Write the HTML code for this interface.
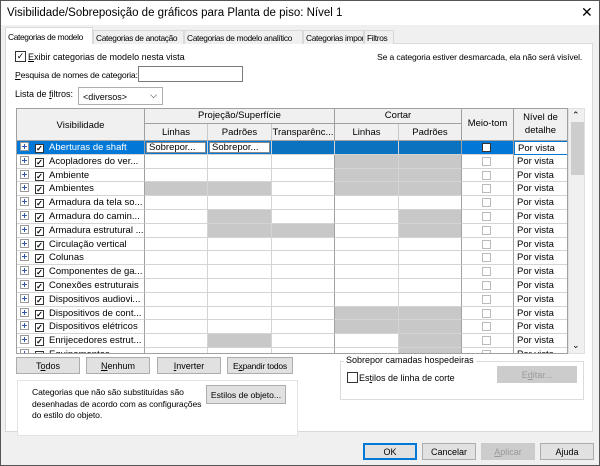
<!DOCTYPE html><html><head><meta charset="utf-8"><style>
*{box-sizing:border-box;margin:0;padding:0}
body{width:600px;height:466px;overflow:hidden;background:#f0f0f0;font-family:"Liberation Sans",sans-serif;font-size:9.5px;color:#000;position:relative;white-space:nowrap}
.a{position:absolute}
.win{left:0;top:0;width:600px;height:466px;border:1px solid #555}
.title{left:1px;top:1px;width:598px;height:24px;background:#fff;font-size:11.5px;padding:6px 0 0 6px}
.tab{top:30px;height:14px;border:1px solid #d9d9d9;border-bottom:none;background:#f0f0f0;font-size:8.4px;padding:2px 1px 0 2px;white-space:nowrap;overflow:hidden;letter-spacing:-0.35px}
.panel{left:5px;top:43px;width:588px;height:389px;background:#fff;border:1px solid #d9d9d9}
.cb{width:11px;height:11px;border:1px solid #333;background:#fff}
.inp{background:#fff;border:1px solid #7a7a7a}
.btn{background:#e1e1e1;border:1px solid #adadad;text-align:center;font-size:9px;padding-top:3px;white-space:nowrap;overflow:hidden}
.tbl{left:16px;top:108px;width:552px;height:246px;border:1px solid #a0a0a0;overflow:hidden;background:#fff}
.h{background:#f0f0f0;border-right:1px solid #a0a0a0;border-bottom:1px solid #a0a0a0;text-align:center;font-size:9.5px;overflow:hidden}
.row{display:flex;height:13.8px;position:relative}
.c{height:13.8px;border-right:1px solid #d4d4d4;border-bottom:1px solid #d4d4d4;white-space:nowrap;overflow:hidden;font-size:9.5px;line-height:13px}
.g{background:#c8c8c8}
.v{width:128px;padding-left:3px;border-right-color:#a0a0a0}
.w1{width:63px}.w2{width:64px}
.mt{width:52px;border-right-color:#a0a0a0;position:relative}
.nv{width:54px;padding-left:3px}
.ex{display:inline-block;width:9px;height:9px;border:1px solid #999;vertical-align:-1px;position:relative;margin-right:1px}
.ex:before{content:"";position:absolute;left:1px;top:3px;width:5px;height:1px;background:#35a}
.ex:after{content:"";position:absolute;left:3px;top:1px;width:1px;height:5px;background:#35a}
.ck{display:inline-block;width:9px;height:9px;border:1px solid #333;margin:0 5px 0 5px;vertical-align:-1px;font-size:8px;line-height:7px;text-align:center;font-weight:bold;background:#fff;color:#000}
.sm{position:absolute;left:20px;top:2px;width:9px;height:9px;border:1px solid #bbb;background:#fff}
.sel .c{background:#0078d7;color:#fff}
.sel .dk{background:#0a72be}
</style></head><body>
<div class="a win"></div>
<div class="a title">Visibilidade/Sobreposição de gráficos para Planta de piso: Nível 1</div>
<div class="a" style="left:581px;top:4px;font-size:14px">✕</div>
<div class="a panel"></div>
<div class="a tab" style="left:5px;top:27px;height:17px;background:#fff;width:88px;padding-top:4px">Categorias de modelo</div>
<div class="a tab" style="left:93px;width:91px">Categorias de anotação</div>
<div class="a tab" style="left:184px;width:119px">Categorias de modelo analítico</div>
<div class="a tab" style="left:303px;width:61px">Categorias importadas</div>
<div class="a tab" style="left:364px;width:30px">Filtros</div>
<div class="a cb" style="left:15px;top:51px;font-size:9px;line-height:9px;text-align:center">✓</div>
<div class="a" style="left:28px;top:52px;font-size:9px"><u>E</u>xibir categorias de modelo nesta vista</div>
<div class="a" style="left:377px;top:52px;font-size:8.6px;letter-spacing:-0.15px">Se a categoria estiver desmarcada, ela não será visível.</div>
<div class="a" style="left:15px;top:70px;font-size:8.7px;letter-spacing:-0.2px"><u>P</u>esquisa de nomes de categoria:</div>
<div class="a inp" style="left:138px;top:66px;width:105px;height:16px"></div>
<div class="a" style="left:15px;top:89px;font-size:9px">Lista de <u>f</u>iltros:</div>
<div class="a inp" style="left:78px;top:87px;width:85px;height:18px;border-color:#adadad;font-size:9px;padding:4px 0 0 4px">&lt;diversos&gt;<span style="position:absolute;right:5px;top:2px;font-size:9px">⌵</span></div>

<div class="a tbl">
 <div class="a h" style="left:0;top:0;width:128px;height:32px;padding-top:11px">Visibilidade</div>
 <div class="a h" style="left:128px;top:0;width:190px;height:15px;padding-top:1px">Projeção/Superfície</div>
 <div class="a h" style="left:128px;top:15px;width:63px;height:17px;padding-top:3px;border-right-color:#c8c8c8">Linhas</div>
 <div class="a h" style="left:191px;top:15px;width:64px;height:17px;padding-top:3px;border-right-color:#c8c8c8">Padrões</div>
 <div class="a h" style="left:255px;top:15px;width:63px;height:17px;padding-top:3px">Transparênc...</div>
 <div class="a h" style="left:318px;top:0;width:127px;height:15px;padding-top:1px">Cortar</div>
 <div class="a h" style="left:318px;top:15px;width:64px;height:17px;padding-top:3px;border-right-color:#c8c8c8">Linhas</div>
 <div class="a h" style="left:382px;top:15px;width:63px;height:17px;padding-top:3px">Padrões</div>
 <div class="a h" style="left:445px;top:0;width:52px;height:32px;padding-top:9px">Meio-tom</div>
 <div class="a h" style="left:497px;top:0;width:54px;height:32px;padding-top:2px;line-height:13px">Nível de<br>detalhe</div>
 <div class="a" style="left:0;top:32px;width:551px">
  <div class="row sel"><div class="c v"><span class="ex" style="background:#fff"></span><span class="ck">✓</span>Aberturas de shaft</div><div class="c w1" style="padding:1px"><div style="background:#fff;color:#000;border:1px solid #888;height:11px;line-height:9px;padding-left:2px">Sobrepor...</div></div><div class="c w2" style="padding:1px"><div style="background:#fff;color:#000;border:1px solid #888;height:11px;line-height:9px;padding-left:2px">Sobrepor...</div></div><div class="c w1 dk"></div><div class="c w2 dk"></div><div class="c w1 dk" style="border-right-color:#a0a0a0"></div><div class="c mt"><span class="sm" style="border-color:#333"></span></div><div class="c nv" style="background:#fff;color:#000;border:1px solid #0078d7">Por vista</div></div>
  <div class="row"><div class="c v"><span class="ex"></span><span class="ck">✓</span>Acopladores do ver...</div><div class="c w1"></div><div class="c w2"></div><div class="c w1" style="border-right-color:#a0a0a0"></div><div class="c w2 g"></div><div class="c w1 g" style="border-right-color:#a0a0a0"></div><div class="c mt"><span class="sm"></span></div><div class="c nv">Por vista</div></div>
  <div class="row"><div class="c v"><span class="ex"></span><span class="ck">✓</span>Ambiente</div><div class="c w1"></div><div class="c w2"></div><div class="c w1" style="border-right-color:#a0a0a0"></div><div class="c w2 g"></div><div class="c w1 g" style="border-right-color:#a0a0a0"></div><div class="c mt"><span class="sm"></span></div><div class="c nv">Por vista</div></div>
  <div class="row"><div class="c v"><span class="ex"></span><span class="ck">✓</span>Ambientes</div><div class="c w1 g"></div><div class="c w2 g"></div><div class="c w1" style="border-right-color:#a0a0a0"></div><div class="c w2 g"></div><div class="c w1 g" style="border-right-color:#a0a0a0"></div><div class="c mt"><span class="sm"></span></div><div class="c nv">Por vista</div></div>
  <div class="row"><div class="c v"><span class="ex"></span><span class="ck">✓</span>Armadura da tela so...</div><div class="c w1"></div><div class="c w2"></div><div class="c w1" style="border-right-color:#a0a0a0"></div><div class="c w2"></div><div class="c w1" style="border-right-color:#a0a0a0"></div><div class="c mt"><span class="sm"></span></div><div class="c nv">Por vista</div></div>
  <div class="row"><div class="c v"><span class="ex"></span><span class="ck">✓</span>Armadura do camin...</div><div class="c w1"></div><div class="c w2 g"></div><div class="c w1" style="border-right-color:#a0a0a0"></div><div class="c w2"></div><div class="c w1 g" style="border-right-color:#a0a0a0"></div><div class="c mt"><span class="sm"></span></div><div class="c nv">Por vista</div></div>
  <div class="row"><div class="c v"><span class="ex"></span><span class="ck">✓</span>Armadura estrutural ...</div><div class="c w1"></div><div class="c w2 g"></div><div class="c w1 g" style="border-right-color:#a0a0a0"></div><div class="c w2"></div><div class="c w1 g" style="border-right-color:#a0a0a0"></div><div class="c mt"><span class="sm"></span></div><div class="c nv">Por vista</div></div>
  <div class="row"><div class="c v"><span class="ex"></span><span class="ck">✓</span>Circulação vertical</div><div class="c w1"></div><div class="c w2"></div><div class="c w1" style="border-right-color:#a0a0a0"></div><div class="c w2"></div><div class="c w1" style="border-right-color:#a0a0a0"></div><div class="c mt"><span class="sm"></span></div><div class="c nv">Por vista</div></div>
  <div class="row"><div class="c v"><span class="ex"></span><span class="ck">✓</span>Colunas</div><div class="c w1"></div><div class="c w2"></div><div class="c w1" style="border-right-color:#a0a0a0"></div><div class="c w2"></div><div class="c w1" style="border-right-color:#a0a0a0"></div><div class="c mt"><span class="sm"></span></div><div class="c nv">Por vista</div></div>
  <div class="row"><div class="c v"><span class="ex"></span><span class="ck">✓</span>Componentes de ga...</div><div class="c w1"></div><div class="c w2"></div><div class="c w1" style="border-right-color:#a0a0a0"></div><div class="c w2"></div><div class="c w1" style="border-right-color:#a0a0a0"></div><div class="c mt"><span class="sm"></span></div><div class="c nv">Por vista</div></div>
  <div class="row"><div class="c v"><span class="ex"></span><span class="ck">✓</span>Conexões estruturais</div><div class="c w1"></div><div class="c w2"></div><div class="c w1" style="border-right-color:#a0a0a0"></div><div class="c w2"></div><div class="c w1" style="border-right-color:#a0a0a0"></div><div class="c mt"><span class="sm"></span></div><div class="c nv">Por vista</div></div>
  <div class="row"><div class="c v"><span class="ex"></span><span class="ck">✓</span>Dispositivos audiovi...</div><div class="c w1"></div><div class="c w2"></div><div class="c w1" style="border-right-color:#a0a0a0"></div><div class="c w2"></div><div class="c w1" style="border-right-color:#a0a0a0"></div><div class="c mt"><span class="sm"></span></div><div class="c nv">Por vista</div></div>
  <div class="row"><div class="c v"><span class="ex"></span><span class="ck">✓</span>Dispositivos de cont...</div><div class="c w1"></div><div class="c w2"></div><div class="c w1" style="border-right-color:#a0a0a0"></div><div class="c w2 g"></div><div class="c w1 g" style="border-right-color:#a0a0a0"></div><div class="c mt"><span class="sm"></span></div><div class="c nv">Por vista</div></div>
  <div class="row"><div class="c v"><span class="ex"></span><span class="ck">✓</span>Dispositivos elétricos</div><div class="c w1"></div><div class="c w2"></div><div class="c w1" style="border-right-color:#a0a0a0"></div><div class="c w2 g"></div><div class="c w1 g" style="border-right-color:#a0a0a0"></div><div class="c mt"><span class="sm"></span></div><div class="c nv">Por vista</div></div>
  <div class="row"><div class="c v"><span class="ex"></span><span class="ck">✓</span>Enrijecedores estrut...</div><div class="c w1"></div><div class="c w2 g"></div><div class="c w1" style="border-right-color:#a0a0a0"></div><div class="c w2"></div><div class="c w1 g" style="border-right-color:#a0a0a0"></div><div class="c mt"><span class="sm"></span></div><div class="c nv">Por vista</div></div>
  <div class="row"><div class="c v"><span class="ex"></span><span class="ck">✓</span>Equipamentos</div><div class="c w1"></div><div class="c w2"></div><div class="c w1" style="border-right-color:#a0a0a0"></div><div class="c w2"></div><div class="c w1 g" style="border-right-color:#a0a0a0"></div><div class="c mt"><span class="sm"></span></div><div class="c nv">Por vista</div></div>
 </div>
</div>
<div class="a" style="left:568px;top:108px;width:17px;height:246px;background:#f0f0f0;border:1px solid #e0e0e0"></div>
<div class="a" style="left:572px;top:110px;font-size:9px">⌃</div>
<div class="a" style="left:571px;top:122px;width:13px;height:53px;background:#cdcdcd"></div>
<div class="a" style="left:572px;top:340px;font-size:9px">⌄</div>

<div class="a btn" style="left:16px;top:357px;width:64px;height:17px">T<u>o</u>dos</div>
<div class="a btn" style="left:86px;top:357px;width:64px;height:17px"><u>N</u>enhum</div>
<div class="a btn" style="left:157px;top:357px;width:64px;height:17px"><u>I</u>nverter</div>
<div class="a btn" style="left:227px;top:357px;width:66px;height:17px;font-size:8.5px;letter-spacing:-0.2px">E<u>x</u>pandir todos</div>
<div class="a" style="left:17px;top:380px;width:281px;height:56px;border:1px solid #e3e3e3;background:#fff"></div>
<div class="a" style="left:32px;top:387px;font-size:8.6px;line-height:11.5px;letter-spacing:-0.1px">Categorias que não são substituídas são<br>desenhadas de acordo com as configurações<br>do estilo do objeto.</div>
<div class="a btn" style="left:206px;top:385px;width:80px;height:19px;padding-top:4px;font-size:8.6px">Estilos de objeto...</div>

<div class="a" style="left:340px;top:361px;width:244px;height:39px;border:1px solid #dcdcdc"></div>
<div class="a" style="left:344px;top:355px;background:#fff;padding:0 2px;font-size:9px">Sobrepor camadas hospedeiras</div>
<div class="a cb" style="left:347px;top:372px;border-color:#333"></div>
<div class="a" style="left:359px;top:373px;font-size:9px">Es<u>t</u>ilos de linha de corte</div>
<div class="a btn" style="left:497px;top:366px;width:80px;height:17px;color:#9a9a9a;background:#ccc;border-color:#ccc">E<u>d</u>itar...</div>

<div class="a btn" style="left:363px;top:443px;width:54px;height:17px;border:2px solid #0078d7;padding-top:2px">OK</div>
<div class="a btn" style="left:422px;top:443px;width:54px;height:17px">Cancelar</div>
<div class="a btn" style="left:481px;top:443px;width:54px;height:17px;color:#9a9a9a;background:#ccc;border-color:#ccc"><u>A</u>plicar</div>
<div class="a btn" style="left:540px;top:443px;width:54px;height:17px">Ajuda</div>
</body></html>
